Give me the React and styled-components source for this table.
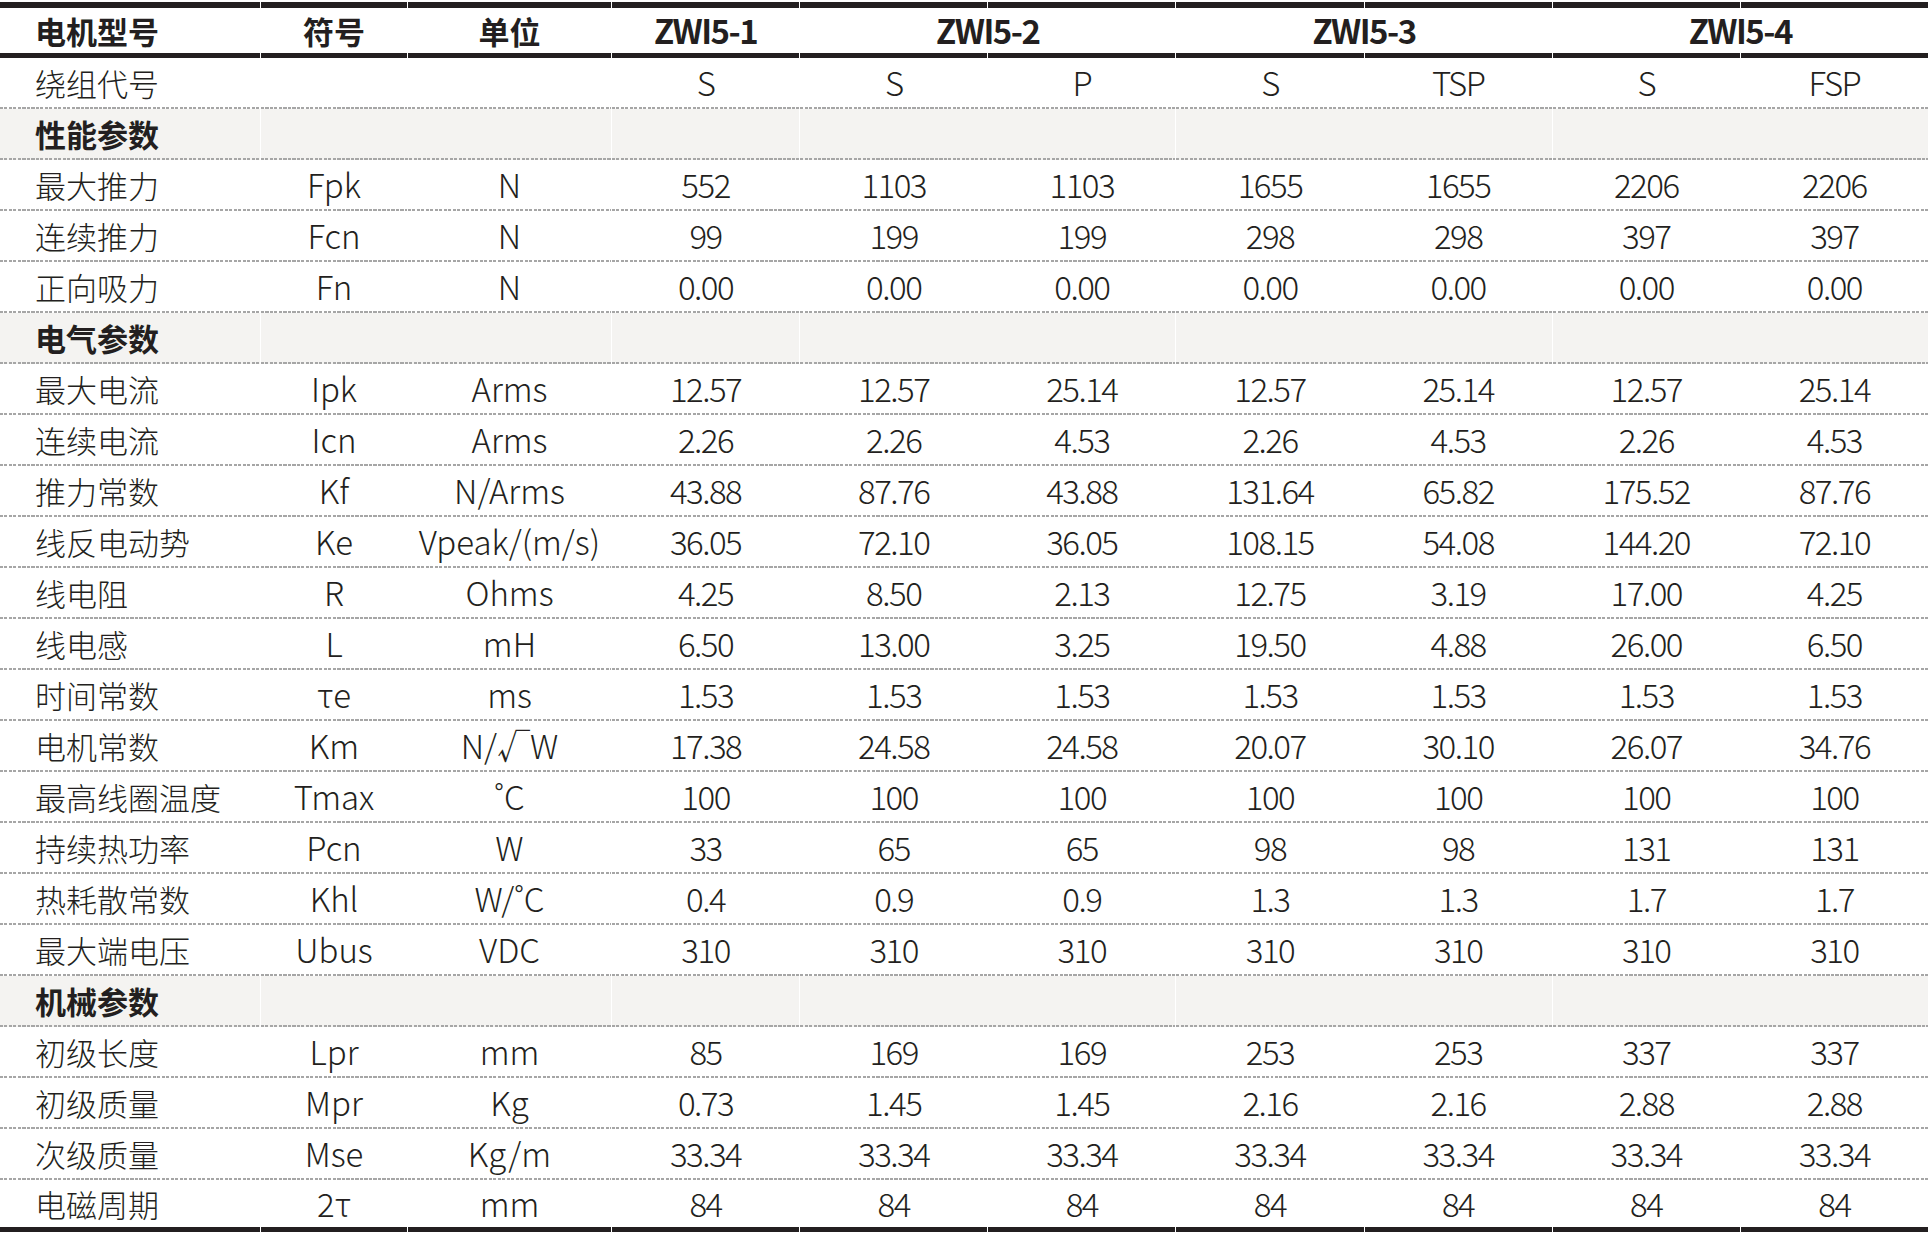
import React from 'react';
import styled, { createGlobalStyle } from 'styled-components';

const GlobalStyle = createGlobalStyle`
  html, body {
    margin: 0;
    padding: 0;
    background: #ffffff;
  }
  body {
    font-family: 'Noto Sans CJK SC', 'Noto Sans', sans-serif;
    color: #231f20;
  }
`;

const INK = '#231f20';
const DOTS = 'repeating-linear-gradient(90deg, #a6a6a6 0 3px, transparent 3px 4.5px)';

const Table = styled.div`
  display: grid;
  grid-template-columns: 260px 146px 203px repeat(7, 1fr);
  column-gap: 1px;
  padding-top: 2px;
  width: 1928px;
  background: #ffffff;
`;

const Rule = styled.div`
  height: ${p => p.$h}px;
  background: ${INK};
`;

const HeadCell = styled.div`
  grid-column: span ${p => p.$span || 1};
  height: 45px;
  display: flex;
  align-items: center;
  justify-content: ${p => (p.$left ? 'flex-start' : 'center')};
  padding-left: ${p => (p.$left ? '35px' : '0')};
  font-size: ${p => (p.$latin ? '33px' : '31px')};
  letter-spacing: ${p => (p.$latin ? '-1.5px' : '0')};
  font-weight: 700;
  line-height: 1;
  white-space: nowrap;
`;

const Cell = styled.div`
  grid-column: span ${p => p.$span || 1};
  height: ${p => (p.$last ? 47 : 51)}px;
  box-sizing: border-box;
  padding-bottom: ${p => (p.$last ? 0 : 2)}px;
  display: flex;
  align-items: center;
  justify-content: ${p => (p.$left ? 'flex-start' : 'center')};
  padding-left: ${p => (p.$left ? '35px' : '0')};
  font-size: ${p => (p.$left ? '31px' : '33px')};
  letter-spacing: ${p => (p.$num ? '-1.5px' : '0')};
  font-weight: ${p => (p.$bold ? 700 : 300)};
  line-height: 1;
  white-space: nowrap;
  background: ${p => (p.$last ? 'none' : `${DOTS} left bottom / 100% 2px no-repeat`)}
    ${p => (p.$section ? '#f4f3f1' : '#ffffff')};
`;

const headers = [
  { t: '电机型号', left: true },
  { t: '符号' },
  { t: '单位' },
  { t: 'ZWI5-1', latin: true },
  { t: 'ZWI5-2', latin: true, span: 2 },
  { t: 'ZWI5-3', latin: true, span: 2 },
  { t: 'ZWI5-4', latin: true, span: 2 }
];

const rows = [
  ['绕组代号', '', '', 'S', 'S', 'P', 'S', 'TSP', 'S', 'FSP'],
  '性能参数',
  ['最大推力', 'Fpk', 'N', '552', '1103', '1103', '1655', '1655', '2206', '2206'],
  ['连续推力', 'Fcn', 'N', '99', '199', '199', '298', '298', '397', '397'],
  ['正向吸力', 'Fn', 'N', '0.00', '0.00', '0.00', '0.00', '0.00', '0.00', '0.00'],
  '电气参数',
  ['最大电流', 'Ipk', 'Arms', '12.57', '12.57', '25.14', '12.57', '25.14', '12.57', '25.14'],
  ['连续电流', 'Icn', 'Arms', '2.26', '2.26', '4.53', '2.26', '4.53', '2.26', '4.53'],
  ['推力常数', 'Kf', 'N/Arms', '43.88', '87.76', '43.88', '131.64', '65.82', '175.52', '87.76'],
  ['线反电动势', 'Ke', 'Vpeak/(m/s)', '36.05', '72.10', '36.05', '108.15', '54.08', '144.20', '72.10'],
  ['线电阻', 'R', 'Ohms', '4.25', '8.50', '2.13', '12.75', '3.19', '17.00', '4.25'],
  ['线电感', 'L', 'mH', '6.50', '13.00', '3.25', '19.50', '4.88', '26.00', '6.50'],
  ['时间常数', 'τe', 'ms', '1.53', '1.53', '1.53', '1.53', '1.53', '1.53', '1.53'],
  ['电机常数', 'Km', 'N/√W', '17.38', '24.58', '24.58', '20.07', '30.10', '26.07', '34.76'],
  ['最高线圈温度', 'Tmax', '˚C', '100', '100', '100', '100', '100', '100', '100'],
  ['持续热功率', 'Pcn', 'W', '33', '65', '65', '98', '98', '131', '131'],
  ['热耗散常数', 'Khl', 'W/˚C', '0.4', '0.9', '0.9', '1.3', '1.3', '1.7', '1.7'],
  ['最大端电压', 'Ubus', 'VDC', '310', '310', '310', '310', '310', '310', '310'],
  '机械参数',
  ['初级长度', 'Lpr', 'mm', '85', '169', '169', '253', '253', '337', '337'],
  ['初级质量', 'Mpr', 'Kg', '0.73', '1.45', '1.45', '2.16', '2.16', '2.88', '2.88'],
  ['次级质量', 'Mse', 'Kg/m', '33.34', '33.34', '33.34', '33.34', '33.34', '33.34', '33.34'],
  ['电磁周期', '2τ', 'mm', '84', '84', '84', '84', '84', '84', '84']
];

// section rows keep the header grouping
const sectionSpans = [1, 2, 1, 2, 2, 2];

const rules = h => Array.from({ length: 10 }, (_, i) => <Rule key={`r${h}${i}`} $h={h} />);

const App = () => {
  return (
    <>
      <GlobalStyle />
      <Table>
        {rules(6)}
        {headers.map(h => (
          <HeadCell key={h.t} $left={h.left} $latin={h.latin} $span={h.span}>
            {h.t}
          </HeadCell>
        ))}
        {rules(5)}
        {rows.map((row, ri) => {
          const last = ri === rows.length - 1;
          if (typeof row === 'string') {
            return sectionSpans.map((s, ci) => (
              <Cell key={`${ri}-${ci}`} $section $span={s} $left={ci === 0} $bold>
                {ci === 0 ? row : ''}
              </Cell>
            ));
          }
          return row.map((v, ci) => (
            <Cell key={`${ri}-${ci}`} $left={ci === 0} $num={ci > 2} $last={last}>
              {v}
            </Cell>
          ));
        })}
        {rules(5)}
      </Table>
    </>
  );
};

export default App;
